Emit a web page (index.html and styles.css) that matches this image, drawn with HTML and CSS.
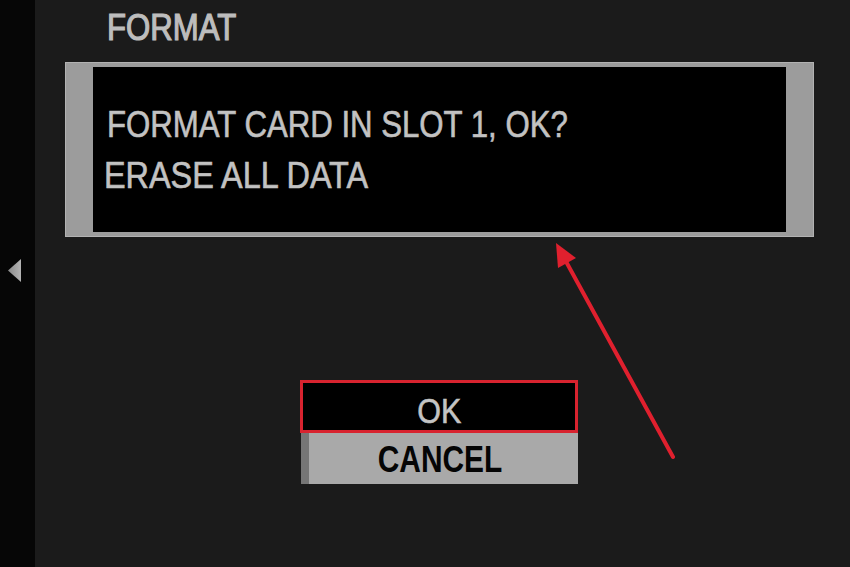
FILE: index.html
```html
<!DOCTYPE html>
<html>
<head>
<meta charset="utf-8">
<link rel="stylesheet" href="styles.css">
</head>
<body>
<div class="side">
  <svg class="tri" width="14" height="24" viewBox="0 0 14 24"><defs><linearGradient id="g" x1="0" x2="1" y1="0" y2="0"><stop offset="0" stop-color="#8a8a8a"/><stop offset="1" stop-color="#b4b4b4"/></linearGradient></defs><polygon points="13,0 13,23 0,11.5" fill="url(#g)"/></svg>
</div>
<div class="main">
  <div class="title"><span class="sq t">FORMAT</span></div>
  <div class="box">
    <div class="msg">
      <div class="line l1"><span class="sq s1">FORMAT CARD IN SLOT 1, OK?</span></div>
      <div class="line l2"><span class="sq s2">ERASE ALL DATA</span></div>
    </div>
  </div>
  <div class="buttons">
    <div class="btn ok"><span class="sq">OK</span></div>
    <div class="btn cancel"><span class="sq bold">CANCEL</span></div>
  </div>
</div>
<svg class="arrow" width="850" height="567" viewBox="0 0 850 567">
  <line x1="673" y1="457" x2="563" y2="256" stroke="#e0202e" stroke-width="4" stroke-linecap="round"/>
  <polygon points="556,243 558,268 576,258" fill="#e0202e"/>
</svg>
</body>
</html>
```
FILE: styles.css
```css
html, body {
  margin: 0;
  padding: 0;
}
body {
  width: 850px;
  height: 567px;
  overflow: hidden;
  background: #1b1b1b;
  display: flex;
  font-family: "Liberation Sans", Arial, sans-serif;
  position: relative;
}
.side {
  width: 35px;
  flex: none;
  background: #060606;
  display: flex;
  flex-direction: column;
  align-items: flex-start;
  padding-top: 259px;
  padding-left: 8px;
  box-sizing: border-box;
}
.main {
  flex: 1;
  padding-left: 30px;
}
.sq {
  display: inline-block;
  transform: scaleX(0.87);
  transform-origin: left center;
  white-space: nowrap;
  -webkit-text-stroke: 0.6px currentColor;
}
.bold {
  font-weight: bold;
  transform: scaleX(0.83);
  -webkit-text-stroke: 0;
}
.t {
  transform: scaleX(0.865);
  -webkit-text-stroke: 1.2px currentColor;
}
.s1 { transform: scaleX(0.866); }
.s2 { transform: scaleX(0.9); }
.title {
  font-size: 36px;
  line-height: 36px;
  height: 52px;
  padding-top: 10px;
  padding-left: 42px;
  color: #bdbdbd;
}
.box {
  width: 749px;
  height: 175px;
  box-sizing: border-box;
  background: #9c9c9c;
  border: 1px solid #b2b2b2;
  padding: 4px 27px;
}
.msg {
  background: #000;
  height: 100%;
  box-sizing: border-box;
  padding-top: 40px;
  color: #c2c2c2;
  font-size: 36px;
  line-height: 36px;
  display: flex;
  flex-direction: column;
  gap: 15px;
}
.l1 { padding-left: 14px; }
.l2 { padding-left: 11px; }
.buttons {
  margin-top: 143px;
  margin-left: 235px;
  width: 278px;
}
.btn {
  font-size: 36px;
  line-height: 36px;
  box-sizing: border-box;
  text-align: center;
}
.btn .sq {
  transform-origin: center center;
}
.ok {
  height: 53px;
  border: 3px solid #d8232f;
  background: #000;
  color: #c4c4c4;
  padding-top: 10px;
  font-size: 35px;
}
.cancel {
  height: 51px;
  margin-left: 1px;
  width: 277px;
  background: #a9a9a9;
  border-left: 8px solid #767676;
  color: #050505;
  padding-top: 9px;
  padding-right: 8px;
}
.arrow {
  position: absolute;
  left: 0;
  top: 0;
  pointer-events: none;
}
```
